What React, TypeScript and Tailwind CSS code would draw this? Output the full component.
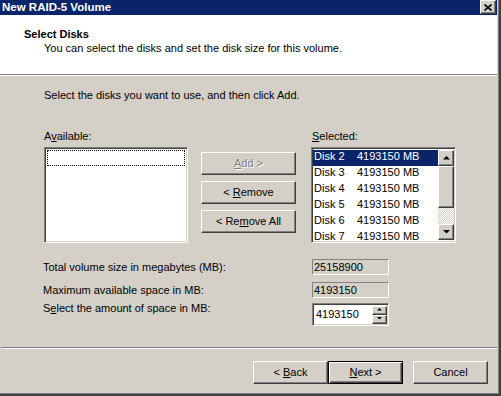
import React from 'react';

const font = "font-['Liberation_Sans',Arial,sans-serif]";

// classic 3D raised edge used by buttons and scrollbar parts
const raised =
  'border border-t-white border-l-white border-r-[#404040] border-b-[#404040] shadow-[inset_-1px_-1px_#808080] bg-[#d4d0c8]';

const Arrow = ({ down = false, size = 7 }: { down?: boolean; size?: number }) => (
  <svg width={size} height={Math.ceil(size / 2) + 1} viewBox={`0 0 ${size} ${Math.ceil(size / 2) + 1}`}>
    <polygon
      points={down ? `0,0 ${size},0 ${size / 2},${size / 2}` : `0,${size / 2} ${size},${size / 2} ${size / 2},0`}
      fill="#000"
    />
  </svg>
);

const Btn = ({ children, disabled = false }: { children: React.ReactNode; disabled?: boolean }) => (
  <div
    className={`w-[95px] h-[23px] flex items-center justify-center ${raised} ${
      disabled ? 'text-[#808080] [text-shadow:1px_1px_0_#fff]' : 'text-black'
    }`}
  >
    <span>{children}</span>
  </div>
);

const WizBtn = ({ children, isDefault = false }: { children: React.ReactNode; isDefault?: boolean }) => (
  <div
    className={`w-[75px] h-[23px] flex items-center justify-center ${
      isDefault
        ? 'border border-black shadow-[inset_1px_1px_#fff,inset_-1px_-1px_#404040,inset_-2px_-2px_#808080] bg-[#d4d0c8]'
        : raised
    }`}
  >
    <span>{children}</span>
  </div>
);

const disks = ['Disk 2', 'Disk 3', 'Disk 4', 'Disk 5', 'Disk 6', 'Disk 7'];

export default function App() {
  return (
    <div
      className={`${font} text-[11px] leading-[13px] text-black w-[501px] h-[396px] bg-[#d4d0c8] overflow-hidden shadow-[inset_-1px_-1px_#404040,inset_-2px_-2px_#404040,inset_-3px_-3px_#808080]`}
    >
      <div className="w-[497px] flex flex-col">
        {/* title bar */}
        <div className="h-[15px] bg-[#0a246a] flex items-center justify-between pl-[2px] pr-[1px]">
          <span className="text-white font-bold text-[11.5px] leading-[15px]">New RAID-5 Volume</span>
          <div className={`w-[16px] h-[14px] mb-[1px] flex items-center justify-center ${raised}`}>
            <svg width="8" height="7" viewBox="0 0 8 7">
              <path d="M0.5 0.5 L7.5 6.5 M7.5 0.5 L0.5 6.5" stroke="#000" strokeWidth="1.6" />
            </svg>
          </div>
        </div>

        {/* header */}
        <div className="h-[59px] bg-white pt-[12px] pl-[24px]">
          <div className="font-bold leading-[14px]">Select Disks</div>
          <div className="pl-[20px] leading-[14px]">You can select the disks and set the disk size for this volume.</div>
        </div>
        <div className="h-px bg-[#808080]" />
        <div className="h-px bg-white" />

        {/* body */}
        <div className="pl-[44px] mt-[13px]">Select the disks you want to use, and then click Add.</div>

        <div className="flex mt-[28px]">
          <div className="ml-[44px] w-[144px] flex flex-col">
            <div>
              A<u>v</u>ailable:
            </div>
            <div className="mt-[4px] h-[96px] bg-white border border-t-[#808080] border-l-[#808080] border-r-white border-b-white shadow-[inset_1px_1px_#404040,inset_-1px_-1px_#d4d0c8] p-[2px]">
              <div className="h-[16px] border border-dotted border-black" />
            </div>
          </div>

          <div className="ml-[13px] pt-[22px] flex flex-col gap-[6px]">
            <Btn disabled>
              <u>A</u>dd &gt;
            </Btn>
            <Btn>
              &lt; <u>R</u>emove
            </Btn>
            <Btn>
              &lt; Re<u>m</u>ove All
            </Btn>
          </div>

          <div className="ml-[15px] w-[145px] flex flex-col">
            <div className="pl-[1px]">
              <u>S</u>elected:
            </div>
            <div className="mt-[4px] h-[96px] bg-white border border-t-[#808080] border-l-[#808080] border-r-white border-b-white shadow-[inset_1px_1px_#404040,inset_-1px_-1px_#d4d0c8] p-[1px] flex overflow-hidden">
              <div className="flex-1 flex flex-col overflow-hidden pt-[1px]">
                {disks.map((d, i) => (
                  <div
                    key={d}
                    className={`h-[16px] shrink-0 flex items-start leading-[13px] pl-[1px] ${
                      i === 0 ? 'bg-[#0a246a] text-white' : ''
                    }`}
                  >
                    <span className="w-[43px]">{d}</span>
                    <span>4193150 MB</span>
                  </div>
                ))}
              </div>
              <div className="w-[16px] flex flex-col pt-[1px] pb-[1px]">
                <div className={`h-[16px] shrink-0 flex items-center justify-center ${raised}`}>
                  <Arrow />
                </div>
                <div className={`h-[42px] shrink-0 ${raised}`} />
                <div className="flex-1 bg-[repeating-conic-gradient(#d4d0c8_0_25%,#ffffff_0_50%)] bg-[length:2px_2px]" />
                <div className={`h-[16px] shrink-0 flex items-center justify-center ${raised}`}>
                  <Arrow down />
                </div>
              </div>
            </div>
          </div>
        </div>

        {/* size fields */}
        <div className="flex flex-col mt-[16px]">
          <div className="flex items-center h-[16px]">
            <span className="ml-[43px] w-[269px]">Total volume size in megabytes (MB):</span>
            <div className="w-[77px] h-[16px] border border-t-[#808080] border-l-[#808080] border-r-white border-b-white flex items-center pl-[1px]">
              25158900
            </div>
          </div>
          <div className="flex items-center h-[16px] mt-[7px]">
            <span className="ml-[43px] w-[269px]">Maximum available space in MB:</span>
            <div className="w-[77px] h-[16px] border border-t-[#808080] border-l-[#808080] border-r-white border-b-white flex items-center pl-[1px]">
              4193150
            </div>
          </div>
          <div className="flex items-start mt-[5px]">
            <span className="ml-[43px] w-[269px] mt-[-1px]">
              S<u>e</u>lect the amount of space in MB:
            </span>
            <div className="w-[77px] h-[23px] bg-white border border-t-[#808080] border-l-[#808080] border-r-white border-b-white shadow-[inset_1px_1px_#404040,inset_-1px_-1px_#d4d0c8] flex items-center justify-between pl-[3px] pr-[1px]">
              <span>4193150</span>
              <div className="flex flex-col w-[15px]">
                <div className={`h-[9px] flex items-center justify-center ${raised}`}>
                  <Arrow size={5} />
                </div>
                <div className={`h-[9px] flex items-center justify-center ${raised}`}>
                  <Arrow down size={5} />
                </div>
              </div>
            </div>
          </div>
        </div>

        <div className="mt-[21px] ml-[1px] h-px bg-[#808080]" />
        <div className="ml-[1px] h-px bg-white" />

        <div className="flex mt-[12px] pl-[253px]">
          <WizBtn>
            &lt; <u>B</u>ack
          </WizBtn>
          <WizBtn isDefault>
            <u>N</u>ext &gt;
          </WizBtn>
          <div className="ml-[10px]">
            <WizBtn>Cancel</WizBtn>
          </div>
        </div>
      </div>
    </div>
  );
}
